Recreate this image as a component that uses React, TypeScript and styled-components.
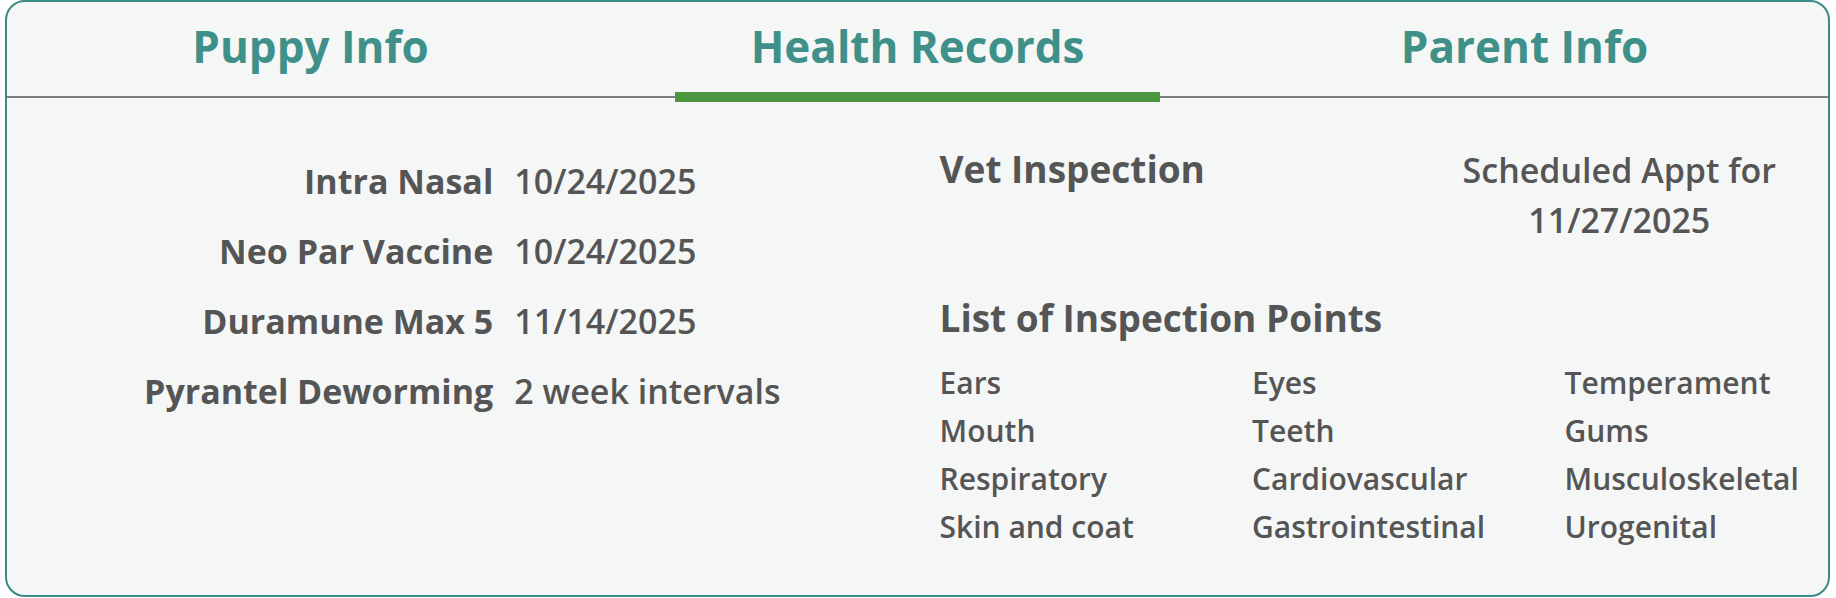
import { useState } from "react";
import styled, { createGlobalStyle } from "styled-components";

const GlobalStyle = createGlobalStyle`
    html, body {
        margin: 0;
        padding: 0;
        background: #ffffff;
        font-family: "Open Sans", "Noto Sans", sans-serif;
        color: #555555;
    }
`;

const tabs = ["Puppy Info", "Health Records", "Parent Info"];

const vaccines = [
    { name: "Intra Nasal", when: "10/24/2025" },
    { name: "Neo Par Vaccine", when: "10/24/2025" },
    { name: "Duramune Max 5", when: "11/14/2025" },
    { name: "Pyrantel Deworming", when: "2 week intervals" },
];

const points = [
    "Ears", "Eyes", "Temperament",
    "Mouth", "Teeth", "Gums",
    "Respiratory", "Cardiovascular", "Musculoskeletal",
    "Skin and coat", "Gastrointestinal", "Urogenital",
];

const App = () => {
    const [active, setActive] = useState(1);

    return (
        <>
            <GlobalStyle />
            <Page>
                <Card>
                    <TabBar>
                        {tabs.map((t, i) => (
                            <Tab key={t} $active={i === active} onClick={() => setActive(i)}>
                                {t}
                            </Tab>
                        ))}
                    </TabBar>
                    <Body>
                        <LeftPane>
                            <VaccineTable>
                                {vaccines.map((v) => (
                                    <VaccineRow key={v.name}>
                                        <VaccineName>{v.name}</VaccineName>
                                        <VaccineDate>{v.when}</VaccineDate>
                                    </VaccineRow>
                                ))}
                            </VaccineTable>
                        </LeftPane>
                        <RightPane>
                            <InspectionHead>
                                <Heading>Vet Inspection</Heading>
                                <Appointment>
                                    Scheduled Appt for
                                    <br />
                                    11/27/2025
                                </Appointment>
                            </InspectionHead>
                            <ListHeading>List of Inspection Points</ListHeading>
                            <PointGrid>
                                {points.map((p) => (
                                    <Point key={p}>{p}</Point>
                                ))}
                            </PointGrid>
                        </RightPane>
                    </Body>
                </Card>
            </Page>
        </>
    );
};

const Page = styled.div`
    width: 1836px;
    height: 598px;
    padding: 0 6px 1px 5px;
    box-sizing: border-box;
`;

const Card = styled.div`
    height: 100%;
    box-sizing: border-box;
    border: 2px solid #3c8a84;
    border-radius: 20px;
    background: #f5f7f7;
    overflow: hidden;
`;

const TabBar = styled.div`
    display: grid;
    grid-template-columns: repeat(3, minmax(0, 1fr));
    border-bottom: 2px solid #808080;
`;

const Tab = styled.button<{ $active: boolean }>`
    position: relative;
    height: 94px;
    padding: 0 0 5px;
    border: none;
    background: none;
    font-family: inherit;
    font-size: 44px;
    font-weight: 700;
    line-height: 1.2;
    color: #40908a;
    text-align: center;
    cursor: pointer;

    &::after {
        content: "";
        display: ${(p) => (p.$active ? "block" : "none")};
        position: absolute;
        left: 10%;
        width: 80%;
        bottom: -6px;
        height: 10px;
        background: #4c963f;
    }
`;

const Body = styled.div`
    display: grid;
    grid-template-columns: repeat(2, minmax(0, 1fr));
    align-items: start;
`;

const LeftPane = styled.div`
    display: flex;
    justify-content: center;
    padding-top: 48px;
`;

const VaccineTable = styled.div`
    display: grid;
    grid-template-columns: auto auto;
    column-gap: 21px;
`;

const VaccineRow = styled.div`
    display: contents;
`;

const VaccineName = styled.div`
    font-size: 34px;
    font-weight: 700;
    line-height: 70px;
    text-align: right;
    white-space: nowrap;
`;

const VaccineDate = styled.div`
    font-size: 34px;
    font-weight: 600;
    line-height: 70px;
    white-space: nowrap;
`;

const RightPane = styled.div`
    padding: 47px 28px 0 22px;
`;

const InspectionHead = styled.div`
    display: flex;
    justify-content: space-between;
    align-items: baseline;
`;

const Heading = styled.div`
    font-size: 37px;
    font-weight: 700;
    line-height: 1.2;
`;

const Appointment = styled.div`
    margin-right: 24px;
    font-size: 34px;
    font-weight: 600;
    line-height: 50px;
    text-align: center;
`;

const ListHeading = styled(Heading)`
    margin-top: 51px;
`;

const PointGrid = styled.div`
    display: grid;
    grid-template-columns: repeat(3, minmax(0, 1fr));
    column-gap: 77px;
    margin-top: 19px;
`;

const Point = styled.div`
    font-size: 30px;
    font-weight: 600;
    line-height: 48px;
    white-space: nowrap;
`;

export default App;
